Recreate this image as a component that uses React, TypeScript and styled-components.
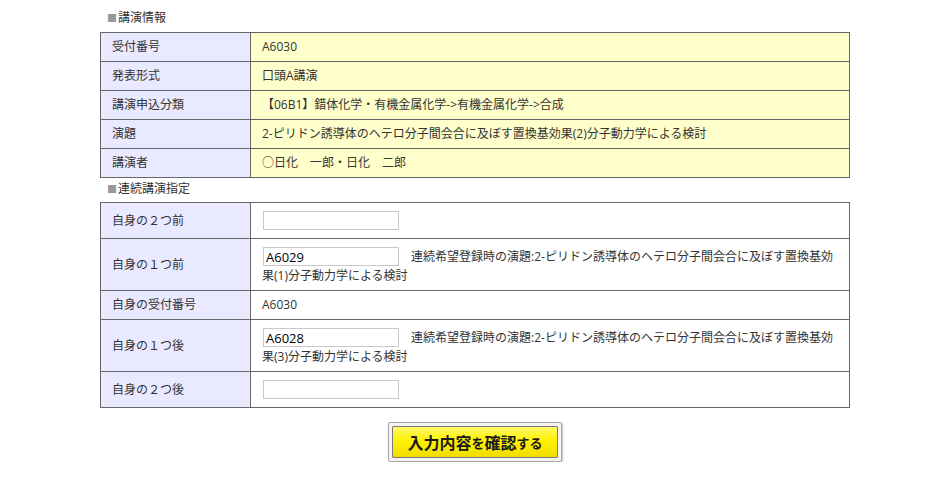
import React from "react";
import styled, { createGlobalStyle } from "styled-components";

const GlobalStyle = createGlobalStyle`
  html, body { margin: 0; padding: 0; background: #ffffff; }
  body {
    font-family: "Open Sans", "Noto Sans CJK JP", sans-serif;
    font-size: 12px;
    color: #333333;
  }
`;

const Page = styled.div`
  width: 750px;
  margin: 0 auto;
  padding-top: 7px;
`;

const SectionTitle = styled.div<{ $bottom?: number }>`
  height: 20px;
  line-height: 20px;
  padding: 1px 0 ${(p) => p.$bottom ?? 4}px 7px;
  font-size: 12px;
  color: #333;
  &::before {
    content: "■";
    color: #999;
    font-size: 10px;
    margin-right: 1px;
  }
`;

const Table = styled.table`
  width: 750px;
  border-collapse: collapse;
  border: 1px solid #666;
  table-layout: fixed;
`;

const Label = styled.th`
  width: 150px;
  box-sizing: border-box;
  background: #e9e9ff;
  border: 1px solid #666;
  padding: 6px 11px;
  line-height: 16px;
  text-align: left;
  font-weight: normal;
  color: #333;
  vertical-align: middle;
`;

const Value = styled.td<{ $tone?: "yellow" | "white"; $pad?: string }>`
  background: ${(p) => (p.$tone === "yellow" ? "#ffffcc" : "#ffffff")};
  border: 1px solid #666;
  padding: ${(p) => p.$pad ?? "6px"} 11px;
  line-height: 16px;
  color: #333;
  vertical-align: middle;
`;

const NoteCell = styled(Value)`
  line-height: 19px;
`;

const NumInput = styled.input`
  box-sizing: border-box;
  width: 136px;
  height: 19px;
  border: 1px solid #c8c8c8;
  padding: 0 2px;
  margin: 0 0 0 1px;
  font-family: "Open Sans", "Noto Sans CJK JP", sans-serif;
  font-size: 13px;
  color: #000;
  vertical-align: top;
  outline: none;
`;

const Note = styled.span`
  margin-left: 12px;
`;

const ButtonRow = styled.div`
  display: flex;
  justify-content: center;
  padding-top: 14px;
`;

const ButtonFrame = styled.div`
  box-sizing: border-box;
  width: 174px;
  height: 40px;
  padding: 3px;
  border: 1px solid #a8a8a8;
  border-radius: 2px;
  background: #f4f4f4;
  box-shadow: 1px 1px 2px rgba(0, 0, 0, 0.25);
`;

const SubmitButton = styled.button`
  box-sizing: border-box;
  width: 100%;
  height: 100%;
  border: 1px solid #7a7a7a;
  border-radius: 1px;
  background: linear-gradient(#fff86a 0%, #fff200 45%, #f2dc00 100%);
  font-family: "Noto Sans CJK JP", sans-serif;
  font-weight: bold;
  color: #1a1a1a;
  font-size: 16px;
  padding: 0;
  display: flex;
  align-items: center;
  justify-content: center;
  cursor: pointer;
`;

const Small = styled.span`
  font-size: 13px;
`;

type Row = { label: string; value: React.ReactNode };

const infoRows: Row[] = [
  { label: "受付番号", value: "A6030" },
  { label: "発表形式", value: "口頭A講演" },
  { label: "講演申込分類", value: "【06B1】錯体化学・有機金属化学->有機金属化学->合成" },
  { label: "演題", value: "2-ピリドン誘導体のヘテロ分子間会合に及ぼす置換基効果(2)分子動力学による検討" },
  { label: "講演者", value: "○日化　一郎・日化　二郎" },
];

export default function App() {
  return (
    <>
      <GlobalStyle />
      <Page>
        <SectionTitle>講演情報</SectionTitle>
        <Table>
          <tbody>
            {infoRows.map((r) => (
              <tr key={r.label}>
                <Label>{r.label}</Label>
                <Value $tone="yellow">{r.value}</Value>
              </tr>
            ))}
          </tbody>
        </Table>

        <SectionTitle $bottom={3}>連続講演指定</SectionTitle>
        <Table>
          <tbody>
            <tr>
              <Label>自身の２つ前</Label>
              <Value $pad="8px">
                <NumInput defaultValue="" />
              </Value>
            </tr>
            <tr>
              <Label>自身の１つ前</Label>
              <NoteCell $pad="8px 11px 5px">
                <NumInput defaultValue="A6029" />
                <Note>連続希望登録時の演題:2-ピリドン誘導体のヘテロ分子間会合に及ぼす置換基効果(1)分子動力学による検討</Note>
              </NoteCell>
            </tr>
            <tr>
              <Label>自身の受付番号</Label>
              <Value>A6030</Value>
            </tr>
            <tr>
              <Label>自身の１つ後</Label>
              <NoteCell $pad="8px 11px 5px">
                <NumInput defaultValue="A6028" />
                <Note>連続希望登録時の演題:2-ピリドン誘導体のヘテロ分子間会合に及ぼす置換基効果(3)分子動力学による検討</Note>
              </NoteCell>
            </tr>
            <tr>
              <Label>自身の２つ後</Label>
              <Value $pad="8px">
                <NumInput defaultValue="" />
              </Value>
            </tr>
          </tbody>
        </Table>

        <ButtonRow>
          <ButtonFrame>
            <SubmitButton type="button">
              入力内容<Small>を</Small>確認<Small>する</Small>
            </SubmitButton>
          </ButtonFrame>
        </ButtonRow>
      </Page>
    </>
  );
}
